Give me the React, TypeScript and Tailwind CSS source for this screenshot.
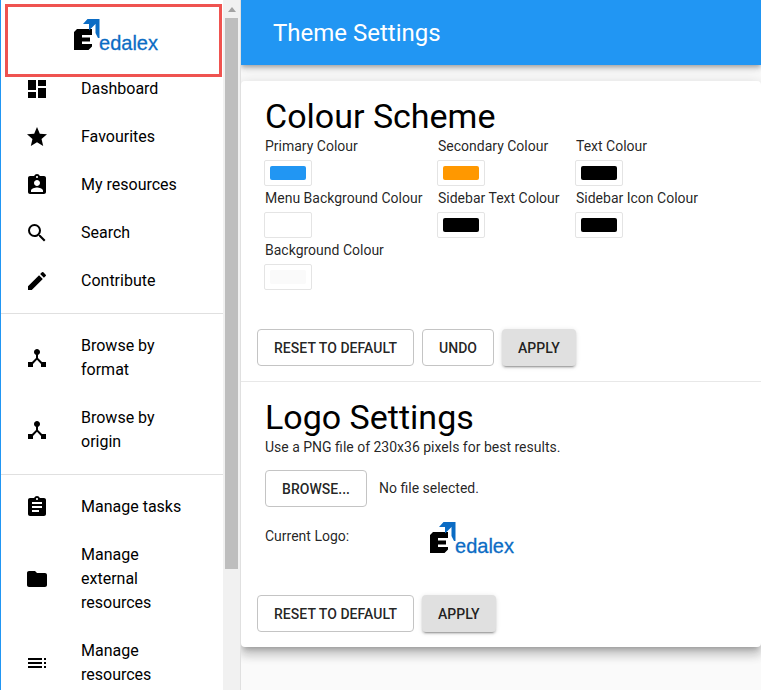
import { MdDashboard, MdStar, MdAssignmentInd, MdSearch, MdEdit, MdDeviceHub, MdAssignment, MdFolder, MdToc } from "react-icons/md";
import type { ReactNode } from "react";

function Logo() {
  return (
    <svg width="92" height="38" viewBox="0 0 92 38" className="block">
      <path d="M3 10H18V16H8V18.5H16V22.5H8V25H18V27.5L14.5 31H0V13Z" fill="#000" />
      <path d="M9 5L13.5 0H25.5V19H24L21.5 14V5Z" fill="#0b6cc4" />
      <path d="M21.5 5H15V11.5Z" fill="#0b6cc4" />
      <text x="25" y="31" fontFamily="'Liberation Sans', sans-serif" fontSize="21" textLength="59" lengthAdjust="spacingAndGlyphs" fill="#0b6cc4" stroke="#0b6cc4" strokeWidth="0.3">edalex</text>
    </svg>
  );
}

function NavItem({ icon, label }: { icon: ReactNode; label: string }) {
  return (
    <div className="flex items-center py-3 pl-6">
      <div className="w-14 shrink-0 text-[24px] text-black">{icon}</div>
      <div className="w-[112px] text-base leading-6 text-black">{label}</div>
    </div>
  );
}

function Swatch({ label, color }: { label: string; color: string }) {
  return (
    <div className="h-[52px]">
      <div className="h-[26px] whitespace-nowrap pl-px text-sm leading-6 text-[#000000de]">{label}</div>
      <div className="flex h-[26px] w-12 items-center justify-center rounded-[2px] border border-[#e4e4e4] bg-white">
        <div className={`h-[14px] w-9 rounded-[2px] ${color}`} />
      </div>
    </div>
  );
}

function OutlineButton({ children }: { children: ReactNode }) {
  return (
    <button className="flex h-[37px] items-center rounded border border-[#c4c4c4] bg-white px-4 text-sm font-medium tracking-[0.04px] text-[#000000de]">
      {children}
    </button>
  );
}

function ApplyButton() {
  return (
    <button className="flex h-[37px] items-center rounded bg-[#e0e0e0] px-4 text-sm font-medium tracking-[0.04px] text-[#000000de] shadow-[0_3px_1px_-2px_rgba(0,0,0,0.2),0_2px_2px_0_rgba(0,0,0,0.14),0_1px_5px_0_rgba(0,0,0,0.12)]">
      APPLY
    </button>
  );
}

export default function App() {
  return (
    <div className="relative flex h-[690px] w-[761px] overflow-hidden bg-[#fafafa] font-['Roboto',sans-serif]">
      <aside className="flex h-full w-[241px] shrink-0 border-r border-[#e0e0e0] border-l border-l-[#2196f3]">
        <div className="h-full w-[222px] overflow-hidden bg-white">
          <div className="flex h-[65px] items-start overflow-hidden pl-[73px] pt-[19px]">
            <Logo />
          </div>
          <NavItem icon={<MdDashboard />} label="Dashboard" />
          <NavItem icon={<MdStar />} label="Favourites" />
          <NavItem icon={<MdAssignmentInd />} label="My resources" />
          <NavItem icon={<MdSearch />} label="Search" />
          <NavItem icon={<MdEdit />} label="Contribute" />
          <div className="my-2 border-t border-[#e0e0e0]" />
          <NavItem icon={<MdDeviceHub />} label="Browse by format" />
          <NavItem icon={<MdDeviceHub />} label="Browse by origin" />
          <div className="my-2 border-t border-[#e0e0e0]" />
          <NavItem icon={<MdAssignment />} label="Manage tasks" />
          <NavItem icon={<MdFolder />} label="Manage external resources" />
          <NavItem icon={<MdToc />} label="Manage resources" />
        </div>
        <div className="flex h-full w-[17px] flex-col bg-[#f1f1f1]">
          <div className="flex h-[18px] items-center justify-center">
            <div className="h-0 w-0 border-x-[4px] border-b-[5px] border-x-transparent border-b-[#a3a3a3]" />
          </div>
          <div className="ml-[2px] h-[551px] w-[13px] bg-[#bebebe]" />
        </div>
      </aside>

      <main className="flex min-w-0 flex-1 flex-col overflow-hidden">
        <header className="z-10 flex h-[65px] shrink-0 items-center bg-[#2196f3] pl-8 text-2xl text-white shadow-[0_2px_4px_-1px_rgba(0,0,0,0.2),0_4px_5px_0_rgba(0,0,0,0.14),0_1px_10px_0_rgba(0,0,0,0.12)]">
          Theme Settings
        </header>
        <div className="mt-4 h-[566px] shrink-0 rounded bg-white shadow-[0_5px_5px_-3px_rgba(0,0,0,0.2),0_8px_10px_1px_rgba(0,0,0,0.14),0_3px_14px_2px_rgba(0,0,0,0.12)]">
          <section className="h-[301px] border-b border-[#e8e8e8] pt-4">
            <h2 className="h-[37px] pl-6 text-[34px] leading-[38px] text-black">Colour Scheme</h2>
            <div className="grid grid-cols-[173px_138px_auto] pl-[23px]">
              <Swatch label="Primary Colour" color="bg-[#2196f3]" />
              <Swatch label="Secondary Colour" color="bg-[#ff9800]" />
              <Swatch label="Text Colour" color="bg-black" />
              <Swatch label="Menu Background Colour" color="bg-white" />
              <Swatch label="Sidebar Text Colour" color="bg-black" />
              <Swatch label="Sidebar Icon Colour" color="bg-black" />
              <Swatch label="Background Colour" color="bg-[#fafafa]" />
            </div>
            <div className="mt-[39px] flex gap-2 pl-4">
              <OutlineButton>RESET TO DEFAULT</OutlineButton>
              <OutlineButton>UNDO</OutlineButton>
              <ApplyButton />
            </div>
          </section>
          <section className="pt-4">
            <h2 className="h-[39px] pl-6 text-[34px] leading-[38px] text-black">Logo Settings</h2>
            <p className="pl-6 text-sm leading-5 text-[#000000de]">Use a PNG file of 230x36 pixels for best results.</p>
            <div className="mt-[13px] flex items-center gap-3 pl-6">
              <OutlineButton>BROWSE...</OutlineButton>
              <span className="pb-[2px] text-sm text-[#000000de]">No file selected.</span>
            </div>
            <div className="mt-[15px] flex h-[33px] items-start pl-6">
              <span className="w-[165px] pt-[4px] text-sm leading-5 text-[#000000de]">Current Logo:</span>
              <Logo />
            </div>
            <div className="mt-[40px] flex gap-2 pl-4">
              <OutlineButton>RESET TO DEFAULT</OutlineButton>
              <ApplyButton />
            </div>
          </section>
        </div>
      </main>

      <div className="absolute left-[5px] top-[4px] h-[73px] w-[217px] border-[3px] border-[#ef5350]" />
    </div>
  );
}
